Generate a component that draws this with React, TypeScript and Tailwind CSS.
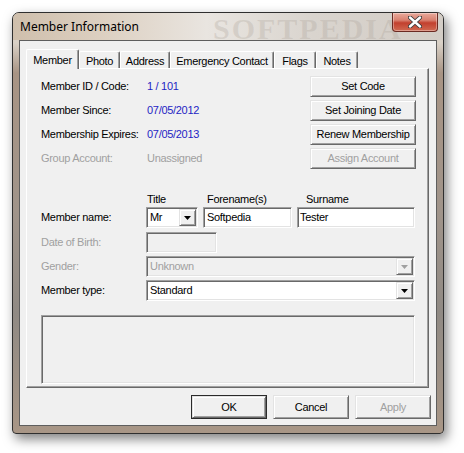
import React from "react";

const sunken =
  "border border-t-[#a0a0a0] border-l-[#a0a0a0] border-r-white border-b-white shadow-[inset_1px_1px_0_#696969,inset_-1px_-1px_0_#e3e3e3]";
const raised =
  "border border-t-[#e3e3e3] border-l-[#e3e3e3] border-r-[#696969] border-b-[#696969] shadow-[inset_1px_1px_0_#ffffff,inset_-1px_-1px_0_#a0a0a0]";

function Arrow({ disabled }: { disabled?: boolean }) {
  return (
    <div className={`w-[17px] h-full flex items-center justify-center bg-[#f0f0f0] ${raised}`}>
      <svg width="7" height="4" viewBox="0 0 7 4">
        <path d="M0 0H7L3.5 4Z" fill={disabled ? "#a0a0a0" : "#000"} />
      </svg>
    </div>
  );
}

function Combo({ value, width, disabled }: { value: string; width: string; disabled?: boolean }) {
  return (
    <div className={`${width} h-[21px] flex items-stretch ${sunken} ${disabled ? "bg-[#f0f0f0]" : "bg-white"} p-[1px]`}>
      <div className={`flex-1 flex items-center pl-[2px] ${disabled ? "text-[#a0a0a0]" : "text-black"}`}>{value}</div>
      <Arrow disabled={disabled} />
    </div>
  );
}

function Edit({ value, width, disabled, pl = "pl-[2px]" }: { value: string; width: string; disabled?: boolean; pl?: string }) {
  return (
    <div className={`${width} h-[21px] flex items-center ${pl} ${sunken} ${disabled ? "bg-[#f0f0f0]" : "bg-white"}`}>
      {value}
    </div>
  );
}

function Btn({ label, disabled, def, w = "w-[106px]", h = "h-[21px]" }: { label: string; disabled?: boolean; def?: boolean; w?: string; h?: string }) {
  const inner = (
    <div className={`w-full h-full flex items-center justify-center bg-[#f0f0f0] ${raised} ${disabled ? "text-[#a0a0a0]" : "text-black"}`}>
      {label}
    </div>
  );
  if (def)
    return <div className={`${w} ${h} border border-[#2b2b2b]`}>{inner}</div>;
  return <div className={`${w} ${h}`}>{inner}</div>;
}

function Tab({ label, w, selected }: { label: string; w: string; selected?: boolean }) {
  return (
    <div
      className={`${w} ${
        selected ? "h-[20px] relative z-10 -mb-px bg-[#f0f0f0]" : "h-[17px] bg-[#f0f0f0]"
      } border-l border-t border-l-white border-t-white border-r border-r-[#696969] shadow-[inset_-1px_0_0_#a0a0a0] rounded-tl-[2px] rounded-tr-[2px] flex items-start justify-center ${
        selected ? "pt-[2px]" : "pt-[1px]"
      }`}
    >
      {label}
    </div>
  );
}

export default function App() {
  return (
    <div className="w-[464px] h-[453px] bg-white relative overflow-hidden font-['Liberation_Sans',Arial,sans-serif] text-[11px] tracking-[-0.3px] text-black">
      <div className="ml-[12px] mt-[12px] w-[432px] h-[422px] rounded-t-[7px] rounded-b-[4px] border border-[#2f2f2f] bg-[linear-gradient(180deg,#d7ccbf_0px,#d9d1c7_30px,#a89484_60px,#a0948a_200px,#908a84_300px,#a89686_100%)] shadow-[3px_5px_12px_rgba(0,0,0,0.5)] flex flex-col">
        {/* title bar */}
        <div className="h-[27px] relative rounded-t-[6px] bg-[linear-gradient(90deg,#cfbfac_0%,#dccfc0_20%,#e9e5e0_45%,#d9d4ce_70%,#d3cdc6_100%)]">
          <div className="absolute left-[200px] top-[2px] font-['Liberation_Serif',serif] font-bold text-[30px] leading-[28px] tracking-[2px] text-[rgba(170,160,150,0.28)] select-none">
            SOFTPEDIA
          </div>
          <div className="absolute left-[7px] top-[6px] font-['Noto_Sans',sans-serif] text-[12px] leading-[16px] tracking-normal text-black">
            Member Information
          </div>
          <div className="absolute right-[5px] top-0 w-[46px] h-[19px] rounded-b-[4px] border border-t-0 border-[#6b2a22] bg-[linear-gradient(180deg,#e9aa9c_0%,#d8806f_40%,#c2402e_55%,#d06a52_100%)] flex items-center justify-center shadow-[inset_0_0_0_1px_rgba(255,255,255,0.35)]">
            <svg width="14" height="12" viewBox="0 0 14 12">
              <path d="M2 1.5L12 10.5M12 1.5L2 10.5" stroke="#3a3a3a" strokeWidth="4.2" strokeLinecap="round" />
              <path d="M2 1.5L12 10.5M12 1.5L2 10.5" stroke="#ffffff" strokeWidth="2.4" strokeLinecap="round" />
            </svg>
          </div>
        </div>
        {/* client area */}
        <div className="ml-[6px] mr-[6px] h-[386px] border border-[#5e5e5e] bg-[#f0f0f0] flex flex-col">
          <div className="ml-[6px] mt-[8px] w-[403px]">
            {/* tabs */}
            <div className="flex items-end h-[19px]">
              <Tab label="Member" w="w-[53px]" selected />
              <Tab label="Photo" w="w-[41px]" />
              <Tab label="Address" w="w-[50px]" />
              <Tab label="Emergency Contact" w="w-[104px]" />
              <Tab label="Flags" w="w-[42px]" />
              <Tab label="Notes" w="w-[42px]" />
            </div>
            {/* panel */}
            <div className="h-[320px] border-l border-t border-l-white border-t-white border-r border-b border-r-[#696969] border-b-[#696969] shadow-[inset_-1px_-1px_0_#a0a0a0] pl-[14px] pr-[12px] pt-[7px]">
              <div className="flex flex-col gap-[3px]">
                {[
                  { l: "Member ID / Code:", v: "1 / 101", b: "Set Code" },
                  { l: "Member Since:", v: "07/05/2012", b: "Set Joining Date" },
                  { l: "Membership Expires:", v: "07/05/2013", b: "Renew Membership" },
                  { l: "Group Account:", v: "Unassigned", b: "Assign Account", d: true },
                ].map((r) => (
                  <div key={r.l} className="flex items-center h-[21px]">
                    <div className={`w-[106px] ${r.d ? "text-[#a0a0a0]" : ""}`}>{r.l}</div>
                    <div className={`flex-1 ${r.d ? "text-[#a0a0a0]" : "text-[#1f1fc4]"}`}>{r.v}</div>
                    <Btn label={r.b} disabled={r.d} />
                  </div>
                ))}
              </div>
              {/* name headers */}
              <div className="flex h-[13px] leading-[13px] mt-[24px] pl-[106px]">
                <div className="w-[57px]">Title</div>
                <div className="w-[102px] pl-[3px]">Forename(s)</div>
                <div>Surname</div>
              </div>
              <div className="flex flex-col gap-[3px] mt-[1px]">
                <div className="flex items-center h-[21px]">
                  <div className="w-[105px]">Member name:</div>
                  <Combo value="Mr" width="w-[52px]" />
                  <div className="w-[5px]" />
                  <Edit value="Softpedia" width="w-[89px]" pl="pl-[3px]" />
                  <div className="w-[5px]" />
                  <Edit value="Tester" width="w-[118px]" />
                </div>
                <div className="flex items-center h-[22px]">
                  <div className="w-[105px] text-[#a0a0a0]">Date of Birth:</div>
                  <Edit value="" width="w-[71px]" disabled />
                </div>
                <div className="flex items-center h-[21px]">
                  <div className="w-[105px] text-[#a0a0a0]">Gender:</div>
                  <Combo value="Unknown" width="w-[269px]" disabled />
                </div>
                <div className="flex items-center h-[21px]">
                  <div className="w-[105px]">Member type:</div>
                  <Combo value="Standard" width="w-[269px]" />
                </div>
              </div>
              <div className={`mt-[14px] w-[374px] h-[69px] bg-[#f0f0f0] ${sunken}`} />
            </div>
            {/* bottom buttons */}
            <div className="flex justify-end gap-[6px] mt-[7px] mr-[-2px]">
              <Btn label="OK" def w="w-[76px]" h="h-[24px]" />
              <Btn label="Cancel" w="w-[76px]" h="h-[24px]" />
              <Btn label="Apply" disabled w="w-[76px]" h="h-[24px]" />
            </div>
          </div>
        </div>
      </div>
    </div>
  );
}
